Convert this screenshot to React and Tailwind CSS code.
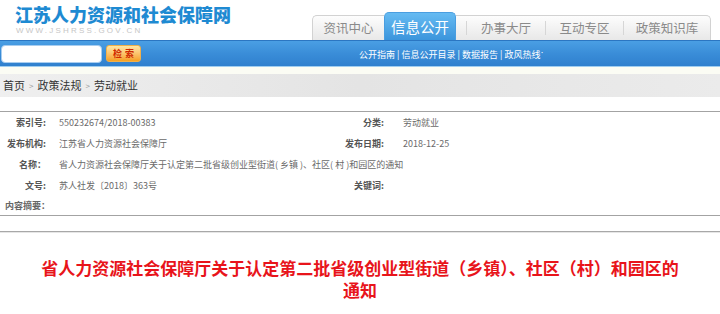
export default function App() {
  const rows = [
    { l: "索引号:", v: "550232674/2018-00383", l2: "分类:", v2: "劳动就业", h: "h-[21px]" },
    { l: "发布机构:", v: "江苏省人力资源社会保障厅", l2: "发布日期:", v2: "2018-12-25", h: "h-[21px]" },
    { l: "名称：", v: "省人力资源社会保障厅关于认定第二批省级创业型街道( 乡镇 )、社区( 村 )和园区的通知", full: true, h: "h-[21px]" },
    { l: "文号:", v: "苏人社发〔2018〕363号", l2: "关键词:", v2: "", h: "h-[21px]" },
    { l: "内容摘要：", v: "", h: "h-[19px]", wide: true },
  ];
  return (
    <div className="w-[720px] h-[314px] overflow-hidden bg-white font-['Noto_Sans_CJK_SC',sans-serif]">
      {/* header */}
      <div className="h-[40px] flex">
        <div className="pl-[15px] pt-[3px]">
          <div className="text-[18px] leading-[22px] font-black text-[#1e8ad2] whitespace-nowrap">江苏人力资源和社会保障网</div>
          <div className="text-[8px] leading-[9px] text-[#c6c6c6] tracking-[2.2px] font-['Liberation_Sans',sans-serif] ml-[1px] mt-[1px]">WWW.JSHRSS.GOV.CN</div>
        </div>
        <div className="ml-auto mr-[9px] self-end flex items-end">
          <div className="w-[72px] h-[25px] bg-gradient-to-b from-[#fdfdfd] to-[#e8e8e8] border-l border-t border-[#d2d2d2] rounded-tl-[5px] flex items-center justify-center text-[12.5px] text-[#8a8a8a]">资讯中心</div>
          <div className="w-[72px] h-[28px] bg-gradient-to-b from-[#66bbf2] to-[#3b95dc] rounded-t-[5px] border border-b-0 border-[#4a9ee0] flex items-center justify-center text-[14.5px] text-white pt-[1px]">信息公开</div>
          <div className="h-[25px] bg-gradient-to-b from-[#fdfdfd] to-[#e8e8e8] border-r border-t border-[#d2d2d2] rounded-tr-[5px] flex items-center pl-[10px] text-[12.5px] text-[#8a8a8a]">
            <div className="w-[79px] border-l border-[#d6d6d6] h-[14px] flex items-center justify-center">办事大厅</div>
            <div className="w-[78px] border-l border-[#d6d6d6] h-[14px] flex items-center justify-center">互动专区</div>
            <div className="w-[87px] border-l border-[#d6d6d6] h-[14px] flex items-center justify-center">政策知识库</div>
          </div>
        </div>
      </div>
      {/* blue bar */}
      <div className="h-[26px] bg-gradient-to-b from-[#4a9fe4] via-[#3a8dd8] to-[#2f80ce] border-t border-[#2b76c2] flex items-center">
        <div className="ml-[1px] w-[101px] h-[18px] bg-white rounded-[4px] border border-[#a8cdef]" />
        <div className="ml-[4px] w-[35px] h-[17px] rounded-[3px] bg-gradient-to-b from-[#ffe6a4] to-[#f5a01c] border border-[#f0b04a] flex items-center justify-center text-[9px] font-bold text-[#d02a00] tracking-[3px] pl-[3px]">检索</div>
        <div className="ml-[218px] mt-[3px] text-white text-[9px] whitespace-nowrap">
          公开指南 | 信息公开目录 | 数据报告 | 政风热线<sup className="text-[6px]">˙</sup>
        </div>
      </div>
      {/* breadcrumb */}
      <div className="h-[8px] bg-[#fbfcf4] border-t border-[#9fcdf0]" />
      <div className="h-[23px] bg-gradient-to-r from-[#efefef] via-[#e4e4e4] to-[#ebebeb] flex items-center pl-[3px] text-[11px] text-[#333] whitespace-nowrap">
        首页<span className="text-[#999] text-[8px] mx-[4px]">&gt;</span>政策法规<span className="text-[#999] text-[8px] mx-[4px]">&gt;</span>劳动就业
      </div>
      <div className="h-[14px]" />
      {/* info table */}
      <div className="border-t border-[#a3a3a3] shadow-[0_1px_0_#e2e2e2]">
        {rows.map((r, i) => (
          <div key={i} className={`${r.h} flex items-center text-[9px] whitespace-nowrap`}>
            <div className={r.wide ? "w-[50px] text-right font-bold text-[#666]" : "w-[46px] text-right font-bold text-[#555]"}>{r.l}</div>
            {r.full ? (
              <div className="ml-[13px] text-[#6a6a6a]">{r.v}</div>
            ) : (
              <>
                <div className="ml-[13px] w-[277px] text-[#6a6a6a]">{r.v}</div>
                {r.l2 !== undefined && (
                  <>
                    <div className="w-[48px] text-right font-bold text-[#555]">{r.l2}</div>
                    <div className="ml-[19px] text-[#6a6a6a]">{r.v2}</div>
                  </>
                )}
              </>
            )}
          </div>
        ))}
      </div>
      <div className="border-t border-[#a3a3a3] shadow-[0_1px_0_#e2e2e2] h-[16px]" />
      <div className="border-t border-[#a8a8a8] shadow-[0_1px_0_#e6e6e6]" />
      {/* title */}
      <div className="pt-[25px] px-[39px] text-center text-[17px] leading-[22px] font-bold text-[#e8141b]">
        省人力资源社会保障厅关于认定第二批省级创业型街道（乡镇）、社区（村）和园区的通知
      </div>
    </div>
  );
}
